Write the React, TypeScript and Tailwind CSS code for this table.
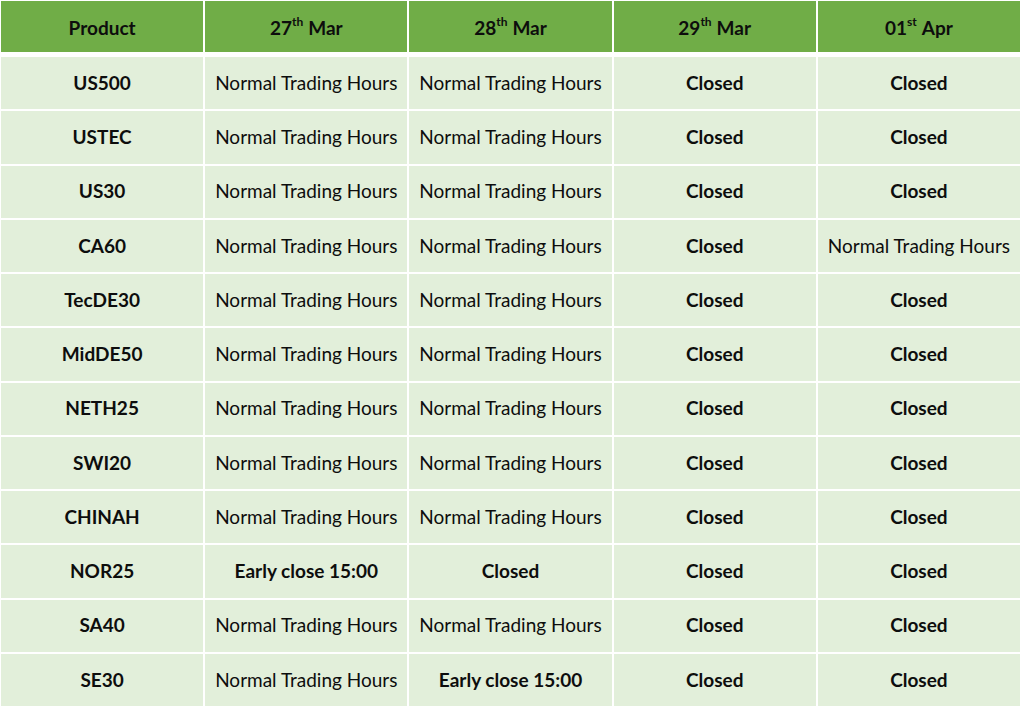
const cols = [
  { day: "27", sup: "th", month: "Mar" },
  { day: "28", sup: "th", month: "Mar" },
  { day: "29", sup: "th", month: "Mar" },
  { day: "01", sup: "st", month: "Apr" },
];

const N = "Normal Trading Hours";
const C = "Closed";
const E = "Early close 15:00";

const rows: [string, string, string, string, string][] = [
  ["US500", N, N, C, C],
  ["USTEC", N, N, C, C],
  ["US30", N, N, C, C],
  ["CA60", N, N, C, N],
  ["TecDE30", N, N, C, C],
  ["MidDE50", N, N, C, C],
  ["NETH25", N, N, C, C],
  ["SWI20", N, N, C, C],
  ["CHINAH", N, N, C, C],
  ["NOR25", E, C, C, C],
  ["SA40", N, N, C, C],
  ["SE30", N, E, C, C],
];

export default function App() {
  return (
    <div
      className="w-[1024px] h-[709px] bg-white pt-px pl-px text-[#0d0d0d]"
      style={{ fontFamily: "Lato, 'Open Sans', sans-serif" }}
    >
      <div className="w-[1019px] h-[705px] flex flex-col">
        {/* header */}
        <div className="grid grid-cols-5 gap-[2px] h-[51px] shrink-0">
          <div className="bg-[#70ad47] flex items-center justify-center pt-[3px] font-bold text-[19px]">
            Product
          </div>
          {cols.map((c, i) => (
            <div
              key={i}
              className="bg-[#70ad47] flex items-center justify-center pt-[3px] font-bold text-[19px]"
            >
              {c.day}
              <sup className="text-[12px] font-bold -top-[6px]">{c.sup}</sup>
              <span className="ml-[5px]">{c.month}</span>
            </div>
          ))}
        </div>

        {/* body */}
        <div className="flex-1 flex flex-col gap-[2px] mt-[5px]">
          {rows.map((r, i) => (
            <div key={i} className="flex-1 grid grid-cols-5 gap-[2px]">
              {r.map((cell, j) => (
                <div
                  key={j}
                  className={`bg-[#e2efda] flex items-center justify-center text-[19px] whitespace-nowrap ${
                    j === 0 || cell !== N ? "font-bold" : ""
                  }`}
                >
                  {cell}
                </div>
              ))}
            </div>
          ))}
        </div>
      </div>
    </div>
  );
}
